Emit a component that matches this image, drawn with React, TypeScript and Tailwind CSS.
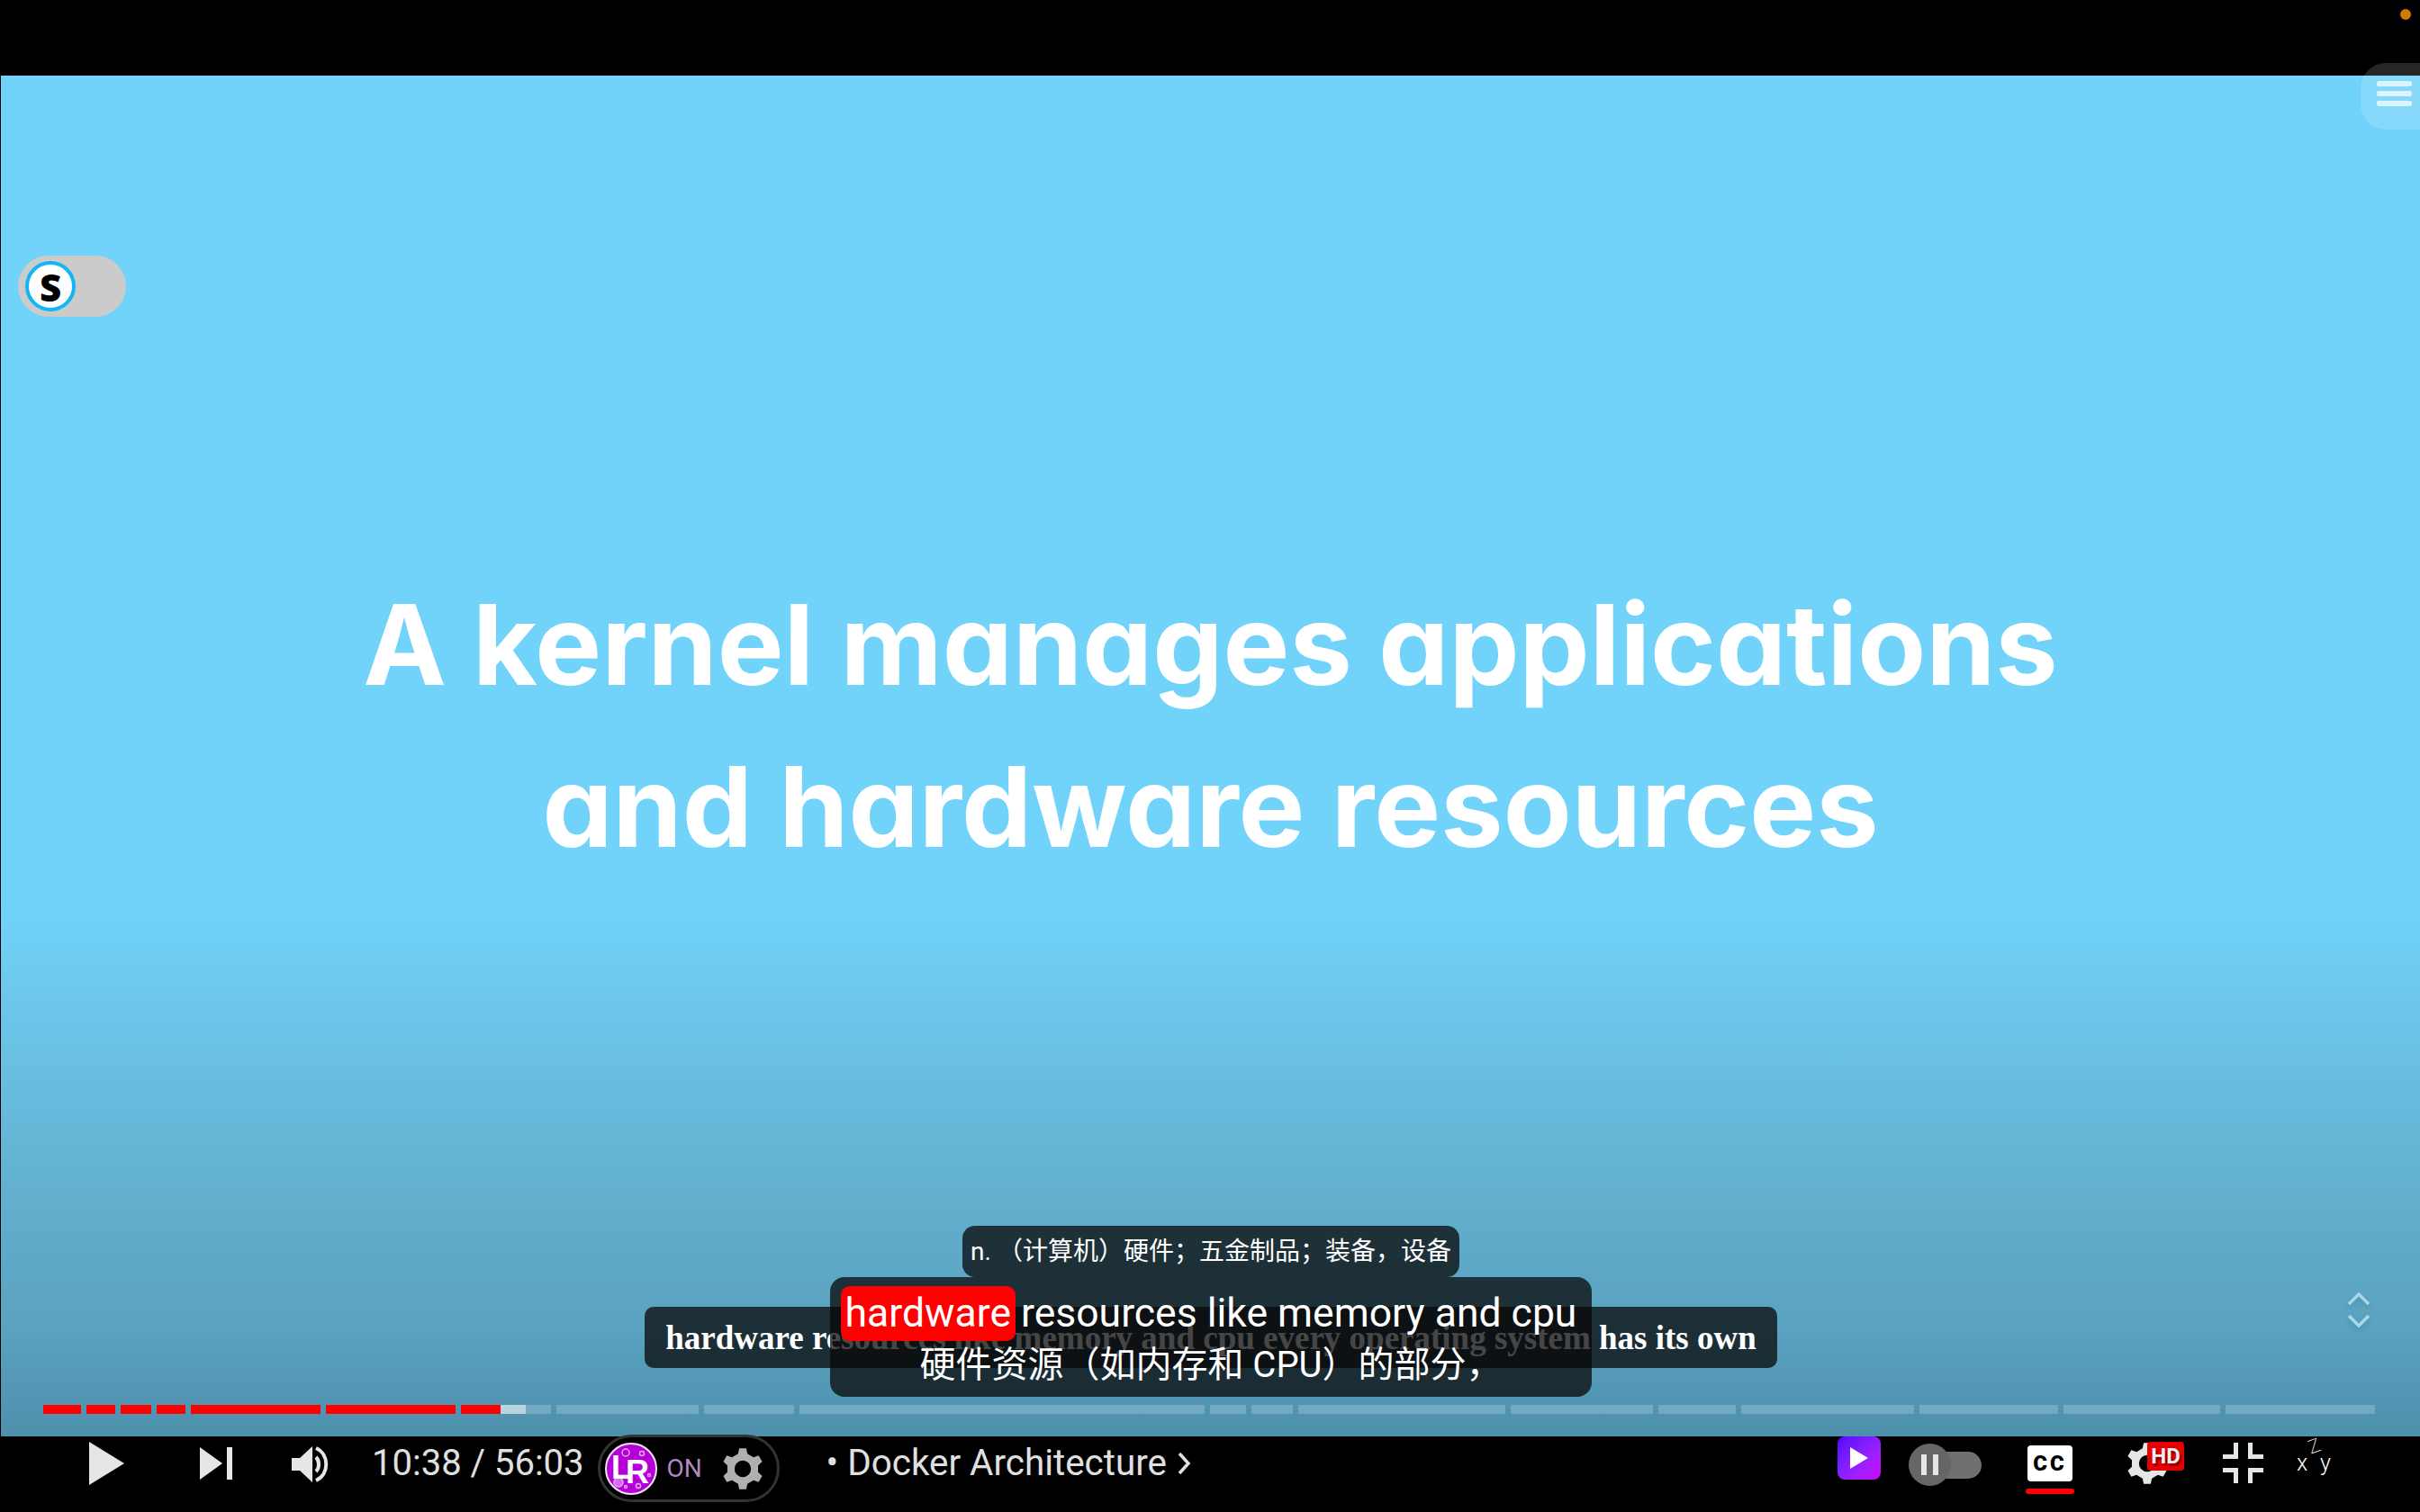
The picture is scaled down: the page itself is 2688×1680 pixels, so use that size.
const segments = [
  { width: 42, red: 42 },
  { width: 32, red: 32 },
  { width: 34, red: 34 },
  { width: 32, red: 32 },
  { width: 144, red: 144 },
  { width: 144, red: 144 },
  { width: 100, red: 44, buffer: 28 },
  { width: 158 },
  { width: 100 },
  { width: 450 },
  { width: 40 },
  { width: 46 },
  { width: 230 },
  { width: 158 },
  { width: 86 },
  { width: 192 },
  { width: 154 },
  { width: 174 },
  { width: 166 },
];

// six tooth cog, same shape for both settings buttons
const cogPath = () => {
  const points: string[] = [];
  const outer = 50;
  const root = 38;
  for (let i = 0; i < 6; i++) {
    const mid = (i * Math.PI) / 3 - Math.PI / 2;
    const at = (r: number, a: number) =>
      `${(50 + r * Math.cos(mid + a)).toFixed(1)} ${(50 + r * Math.sin(mid + a)).toFixed(1)}`;
    points.push(at(root, -0.3), at(outer, -0.17), at(outer, 0.17), at(root, 0.3));
  }
  return `M${points.join("L")}Z`;
};

const Cog = ({ className, hole }: { className: string; hole: number }) => (
  <svg viewBox="0 0 100 100" className={className}>
    <path
      fill="currentColor"
      fillRule="evenodd"
      d={`${cogPath()}M${50 - hole} 50a${hole} ${hole} 0 1 0 ${hole * 2} 0a${hole} ${hole} 0 1 0 ${-hole * 2} 0Z`}
    />
  </svg>
);

const LrLogo = () => (
  <svg viewBox="0 0 58 58" className="h-[58px] w-[58px]">
    <circle cx="29" cy="29" r="28" fill="#b500d8" stroke="#f4e6f8" strokeWidth="2" />
    <g fill="none" stroke="#e6a6f0" strokeWidth="1.5">
      <circle cx="23" cy="11" r="4" />
      <circle cx="41" cy="12" r="2.5" />
      <circle cx="15" cy="44" r="5" fill="#d070e6" />
      <circle cx="23" cy="49" r="1.5" />
      <circle cx="37" cy="48" r="2.5" />
      <circle cx="49" cy="36" r="1.5" />
    </g>
    <text x="7" y="40" fill="#fff" fontSize="36" fontWeight="700" fontFamily="Liberation Sans">
      L
    </text>
    <text x="23" y="45" fill="#fff" fontSize="36" fontWeight="700" fontFamily="Liberation Sans">
      R
    </text>
  </svg>
);

const PlayerControls = () => (
  <div className="relative z-10 flex h-[84px] shrink-0 justify-between bg-black pl-[99px] pr-[99px] text-[#e0e0e0]">
    <div className="flex items-start">
      <svg viewBox="0 0 39 48" className="mt-[6px] h-[48px] w-[39px]">
        <path d="M0 0L39 24L0 48Z" fill="#e6e6e6" />
      </svg>
      <svg viewBox="0 0 36 36" className="ml-[84px] mt-[12px] h-[36px] w-[36px]">
        <path d="M0 0L25 18L0 36Z M30 0H36V36H30Z" fill="#e6e6e6" />
      </svg>
      <svg viewBox="0 0 44 42" className="ml-[66px] mt-[10px] h-[42px] w-[44px]">
        <path d="M0 14H9L23 1V41L9 28H0Z" fill="#e6e6e6" />
        <path
          d="M27 13C31 17 31 25 27 29M27 3C42 10 42 32 27 39"
          fill="none"
          stroke="#e6e6e6"
          strokeWidth="4"
        />
      </svg>
      <span className="ml-[45px] mt-[6px] whitespace-nowrap text-[40px] leading-[48px]">10:38 / 56:03</span>
      <div className="-mt-[2px] ml-[15px] flex h-[75px] w-[202px] items-center rounded-full border-[3px] border-[#333] pl-[5px]">
        <LrLogo />
        <span className="ml-[11px] text-[28px] text-[#b18ac0]">ON</span>
        <Cog className="ml-[22px] h-[46px] w-[46px] text-[#b0b0b0]" hole={20} />
      </div>
      <span className="ml-[52px] mt-[6px] whitespace-nowrap text-[40.4px] leading-[48px]">• Docker Architecture</span>
      <svg viewBox="0 0 15 26" className="ml-[12px] mt-[17px] h-[26px] w-[15px]">
        <path d="M2 2L12 13L2 24" fill="none" stroke="#e0e0e0" strokeWidth="3.5" />
      </svg>
    </div>

    <div className="flex items-start">
      <div className="flex h-[48px] w-[48px] items-center justify-center rounded-[8px] bg-gradient-to-br from-[#4d00ff] to-[#cc00ff]">
        <svg viewBox="0 0 20 24" className="h-[24px] w-[20px]">
          <path d="M0 0L20 12L0 24Z" fill="#fff" />
        </svg>
      </div>
      <div className="relative ml-[31px] mt-[8px] flex h-[47px] w-[81px] items-center justify-end">
        <div className="h-[30px] w-[60px] rounded-full bg-[#707070]" />
        <div className="absolute left-0 top-0 flex h-[47px] w-[47px] items-center justify-center gap-[7px] rounded-full bg-[#666]">
          <div className="h-[23px] w-[6px] bg-[#e6e6e6]" />
          <div className="h-[23px] w-[6px] bg-[#e6e6e6]" />
        </div>
      </div>
      <div className="ml-[49px] mt-[10px] flex w-[54px] flex-col items-center">
        <div className="flex h-[40px] w-[50px] items-center justify-center rounded-[4px] bg-white text-[24px] font-black tracking-[3px] text-black">
          CC
        </div>
        <div className="mt-[8px] h-[6px] w-[54px] rounded-full bg-[#ff0000]" />
      </div>
      <div className="relative ml-[58px] mt-[7px] h-[46px] w-[64px]">
        <Cog className="h-[46px] w-[46px] text-[#e6e6e6]" hole={20} />
        <div className="absolute right-0 -top-[1px] flex h-[32px] w-[41px] items-center justify-center rounded-[4px] bg-[#e60000] text-[24px] font-bold text-[#eee] [text-shadow:2px_3px_0_#8a0000]">
          HD
        </div>
      </div>
      <svg viewBox="0 0 45 45" className="ml-[43px] mt-[7px] h-[45px] w-[45px]">
        <path
          d="M12 0H17V18H0V13H12Z M28 0H33V13H45V18H28Z M0 28H17V45H12V33H0Z M28 28H45V33H33V45H28Z"
          fill="#e6e6e6"
        />
      </svg>
      <div className="ml-[37px] flex w-[38px] flex-col items-center text-white">
        <span className="-rotate-[20deg] text-[28px] font-thin leading-[18px]">z</span>
        <div className="flex w-full justify-between text-[25px] font-light leading-[24px]">
          <span>x</span>
          <span>y</span>
        </div>
      </div>
    </div>
  </div>
);

const App = () => {
  return (
    <div className="flex h-[1680px] w-[2688px] flex-col overflow-hidden bg-black [font-family:Roboto,'Noto_Sans_CJK_SC',sans-serif]">
      <div className="relative h-[84px] shrink-0">
        <div className="absolute right-[10px] top-[10px] h-[12px] w-[12px] rounded-full bg-[#c97a08]" />
      </div>

      <div className="relative flex flex-1 items-center justify-center border-l border-black bg-[linear-gradient(to_bottom,#71d3f9_0%,#71d3f9_61%,#62aecd_83%,#5aa3c1_91.7%,#4e90ac_100%)] pb-[68px]">
        {/* Slide text */}
        <h1 className="text-center text-[124px] font-bold leading-[180px] text-white [font-family:Inter,sans-serif] [font-feature-settings:'cv11']">
          A kernel manages applications
          <br />
          and hardware resources
        </h1>

        {/* Menu tab, top right */}
        <div className="absolute -top-[14px] right-0 flex h-[74px] w-[66px] flex-col gap-[5px] rounded-l-[28px] bg-white/15 pl-[18px] pt-[20px]">
          <div className="h-[6px] w-[39px] rounded-[2px] bg-white/70" />
          <div className="h-[6px] w-[39px] rounded-[2px] bg-white/70" />
          <div className="h-[6px] w-[39px] rounded-[2px] bg-white/70" />
        </div>

        {/* S toggle */}
        <div className="absolute left-[19px] top-[200px] flex h-[68px] w-[120px] items-center rounded-full bg-[#cbcbcb] pl-[8px]">
          <div className="flex h-[56px] w-[56px] items-center justify-center rounded-full border-[4px] border-[#12b5f5] bg-white text-[42px] font-extrabold text-black [font-family:'Open_Sans',sans-serif]">
            S
          </div>
        </div>

        {/* Caption scroll arrows */}
        <div className="absolute right-[56px] top-[1352px] flex flex-col gap-[11px] drop-shadow-md">
          <svg viewBox="0 0 24 14" className="h-[14px] w-[24px]">
            <path d="M1 13L12 2L23 13" fill="none" stroke="#aad6e8" strokeWidth="3.5" />
          </svg>
          <svg viewBox="0 0 24 14" className="h-[14px] w-[24px]">
            <path d="M1 1L12 12L23 1" fill="none" stroke="#aad6e8" strokeWidth="3.5" />
          </svg>
        </div>

        {/* Native caption behind */}
        <div className="absolute left-[715px] top-[1368px] flex h-[68px] w-[1258px] items-center justify-center rounded-[10px] bg-[#080808]/75 pt-[2px] text-[37px] font-bold text-white [font-family:'Liberation_Serif',serif]">
          hardware resources like memory and cpu every operating system has its own
        </div>

        {/* Dual caption */}
        <div className="absolute left-[921px] top-[1335px] flex h-[133px] w-[846px] flex-col items-center rounded-[16px] bg-[#080808]/75 pt-[10px] text-white">
          <div className="flex h-[61px] items-center text-[44.5px] leading-[61px]">
            <span className="-ml-[5px] mr-[6px] rounded-[10px] bg-[#ff0000] px-[5px]">hardware</span>
            <span>resources like memory and cpu</span>
          </div>
          <div className="pt-[2px] text-[40px] leading-[50px]">硬件资源（如内存和 CPU）的部分，</div>
        </div>

        {/* Word lookup */}
        <div className="absolute left-[1068px] top-[1278px] flex h-[57px] w-[552px] items-center justify-center rounded-[14px] bg-[#080808]/75 text-[28px] text-white">
          n. （计算机）硬件；五金制品；装备，设备
        </div>

        {/* Chapter bar */}
        <div className="absolute left-[47px] top-[1477px] flex h-[10px] gap-[6px]">
          {segments.map((seg, i) => (
            <div key={i} className="flex h-full bg-white/20" style={{ width: seg.width }}>
              {seg.red && <div className="h-full bg-[#ff0000]" style={{ width: seg.red }} />}
              {seg.buffer && <div className="h-full bg-white/50" style={{ width: seg.buffer }} />}
            </div>
          ))}
        </div>
      </div>

      <PlayerControls />
    </div>
  );
};

export default App;
